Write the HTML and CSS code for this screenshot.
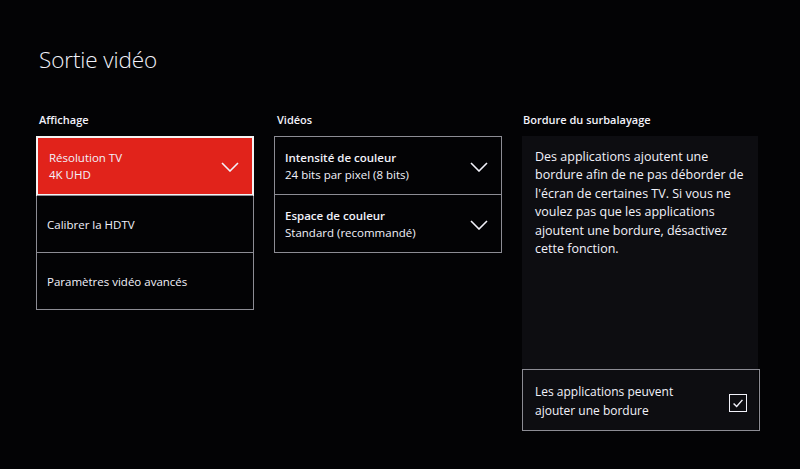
FILE: index.html
```html
<!DOCTYPE html>
<html lang="fr">
<head>
    <meta charset="UTF-8">
    <meta name="viewport" content="width=device-width, initial-scale=1.0">
    <title>Sortie vidéo</title>
    <link rel="stylesheet" href="styles.css">
</head>
<body>
    <div class="page">
        <h1>Sortie vidéo</h1>
        <div class="columns">
            <div class="col col-display">
                <h2>Affichage</h2>
                <div class="list">
                    <div class="item selected">
                        <div class="item-text">
                            <div>Résolution TV</div>
                            <div>4K UHD</div>
                        </div>
                        <svg class="chevron" viewBox="0 0 18 10"><path d="M1 1 L9 9 L17 1" /></svg>
                    </div>
                    <div class="item">
                        <div class="item-text">Calibrer la HDTV</div>
                    </div>
                    <div class="item">
                        <div class="item-text">Paramètres vidéo avancés</div>
                    </div>
                </div>
            </div>
            <div class="col col-videos">
                <h2>Vidéos</h2>
                <div class="list">
                    <div class="item tall">
                        <div class="item-text">
                            <div class="strong">Intensité de couleur</div>
                            <div>24 bits par pixel (8 bits)</div>
                        </div>
                        <svg class="chevron" viewBox="0 0 18 10"><path d="M1 1 L9 9 L17 1" /></svg>
                    </div>
                    <div class="item tall">
                        <div class="item-text">
                            <div class="strong">Espace de couleur</div>
                            <div>Standard (recommandé)</div>
                        </div>
                        <svg class="chevron" viewBox="0 0 18 10"><path d="M1 1 L9 9 L17 1" /></svg>
                    </div>
                </div>
            </div>
            <div class="col col-overscan">
                <h2>Bordure du surbalayage</h2>
                <div class="panel">
                    <p class="desc">Des applications ajoutent une bordure afin de ne pas déborder de l'écran de certaines TV. Si vous ne voulez pas que les applications ajoutent une bordure, désactivez cette fonction.</p>
                    <div class="check-row">
                        <div class="check-label">Les applications peuvent<br>ajouter une bordure</div>
                        <div class="checkbox">
                            <svg viewBox="0 0 18 18"><path d="M4 9.5 L7.5 13 L14 5.5" /></svg>
                        </div>
                    </div>
                </div>
            </div>
        </div>
    </div>
</body>
</html>
```

FILE: styles.css
```css
body{
    margin: 0;
    background: #030305;
    color: #f2f2fa;
    font-family: "Open Sans", "Noto Sans", sans-serif;
}
.page{
    width: 800px;
    height: 469px;
    padding: 44px 0 0 36px;
    box-sizing: border-box;
    overflow: hidden;
}
h1{
    margin: 0 0 0 3px;
    font-size: 22.5px;
    font-weight: 300;
    line-height: 32px;
    letter-spacing: -0.1px;
}
.columns{
    display: flex;
    gap: 20px;
    margin-top: 36px;
}
h2{
    margin: 0 0 8px 3px;
    font-size: 11px;
    font-weight: 600;
    line-height: 16px;
}
.col-display{ width: 218px; }
.col-videos{ width: 228px; }
.col-overscan{ width: 236px; }
.col-overscan h2{ margin-left: 1px; }

.list{
    border: 1px solid #8c8c94;
}
.item{
    height: 56px;
    display: flex;
    align-items: center;
    justify-content: space-between;
    padding: 0 12px 0 10px;
    border-top: 1px solid #8c8c94;
    font-size: 11.5px;
    font-weight: 500;
    line-height: 17px;
}
.item:first-child{ border-top: none; }
.item.tall{ height: 57px; }
.item.selected{
    height: 56px;
    margin: -1px;
    padding-left: 11px;
    background: #e1231b;
    border: 2px solid #f4f4f4;
}
.strong{ font-weight: 600; }
.chevron{
    width: 18px;
    height: 10px;
    margin: 2px 1px 0 0;
    fill: none;
    stroke: #f2f2fa;
    stroke-width: 1.6;
}

.panel{
    height: 295px;
    background: #0d0d11;
    display: flex;
    flex-direction: column;
    justify-content: space-between;
}
.desc{
    margin: 0;
    padding: 12px 14px 0 13px;
    font-size: 12.5px;
    line-height: 18.4px;
    font-weight: 500;
}
.check-row{
    height: 58px;
    border: 1px solid #8c8c94;
    margin-right: -2px;
    display: flex;
    align-items: center;
    justify-content: space-between;
    padding: 2px 12px 0 12px;
    font-size: 12px;
    font-weight: 500;
    line-height: 19px;
}
.checkbox{
    width: 16px;
    height: 16px;
    border: 1.5px solid #f2f2fa;
    margin-top: 4px;
}
.checkbox svg{
    display: block;
    width: 16px;
    height: 16px;
    fill: none;
    stroke: #f2f2fa;
    stroke-width: 1.6;
}
```
